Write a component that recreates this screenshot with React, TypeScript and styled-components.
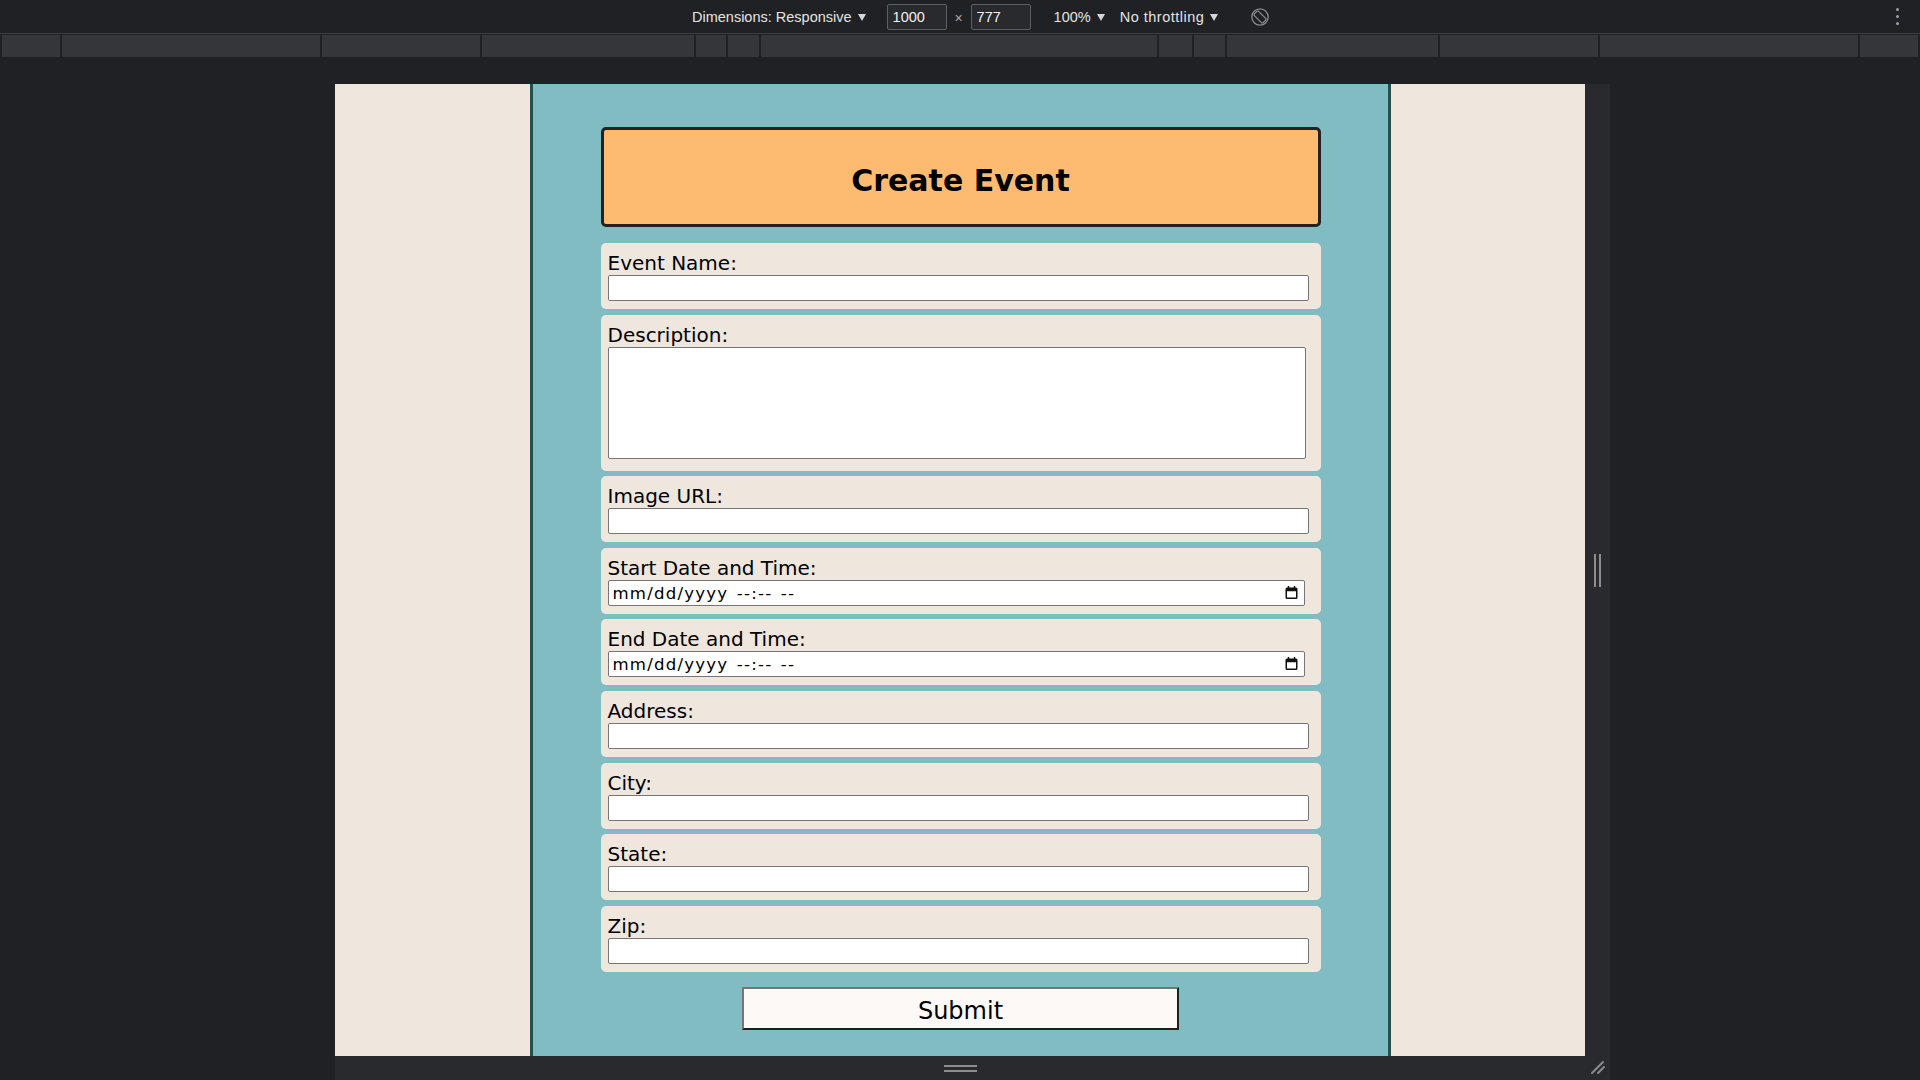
import React from "react";
import styled, { createGlobalStyle } from "styled-components";

const GlobalStyle = createGlobalStyle`
  html, body {
    margin: 0;
    padding: 0;
    background: #202124;
    overflow: hidden;
  }
  * {
    box-sizing: border-box;
  }
`;

// media query bars in the devtools ruler, left to right
const rulerSegments = [58, 258, 158, 212, 30, 31, 396, 33, 31, 211, 158, 258, 58];

const fields = [
  { id: "name", label: "Event Name:", type: "text" },
  { id: "description", label: "Description:", type: "textarea" },
  { id: "image", label: "Image URL:", type: "text" },
  { id: "start", label: "Start Date and Time:", type: "date" },
  { id: "end", label: "End Date and Time:", type: "date" },
  { id: "address", label: "Address:", type: "text" },
  { id: "city", label: "City:", type: "text" },
  { id: "state", label: "State:", type: "text" },
  { id: "zip", label: "Zip:", type: "text" },
];

const RotateIcon = () => (
  <svg width="20" height="20" viewBox="0 0 20 20" fill="none" stroke="#8a8b8d" strokeWidth="1.3">
    <circle cx="10" cy="10" r="8.2" />
    <rect x="7" y="3.8" width="6" height="12.4" rx="1.2" transform="rotate(-45 10 10)" />
  </svg>
);

const CalendarIcon = () => (
  <svg width="13" height="13" viewBox="0 0 13 13" fill="none" stroke="#111" strokeWidth="1.5">
    <rect x="1.25" y="2.25" width="10.5" height="10" rx="0.8" />
    <line x1="1.25" y1="4" x2="11.75" y2="4" strokeWidth="2.5" />
    <line x1="3.5" y1="0" x2="3.5" y2="2.5" />
    <line x1="9.5" y1="0" x2="9.5" y2="2.5" />
  </svg>
);

const CornerIcon = () => (
  <svg width="16" height="16" viewBox="0 0 16 16" stroke="#8a8b8d" strokeWidth="2" strokeLinecap="round">
    <line x1="2" y1="14" x2="13" y2="3" />
    <line x1="8" y1="14" x2="14" y2="8" />
  </svg>
);

export default function App() {
  return (
    <Shell>
      <GlobalStyle />
      <Toolbar>
        <ToolText>Dimensions: Responsive</ToolText>
        <Caret />
        <DimBox $first>1000</DimBox>
        <Times>×</Times>
        <DimBox>777</DimBox>
        <ToolText $ml={23}>100%</ToolText>
        <Caret />
        <ToolText $ml={15} $spacing={0.5}>No throttling</ToolText>
        <Caret />
        <RotateWrap>
          <RotateIcon />
        </RotateWrap>
        <Kebab>
          <Dot />
          <Dot />
          <Dot />
        </Kebab>
      </Toolbar>
      <Ruler>
        {rulerSegments.map((w, i) => (
          <RulerBar key={i} $w={w} />
        ))}
      </Ruler>
      <Stage>
        <Frame>
          <Page>
            <Side />
            <Panel>
              <Header>
                <Title>Create Event</Title>
              </Header>
              <Form onSubmit={(e) => e.preventDefault()}>
                {fields.map((f) => (
                  <Field key={f.id}>
                    <Label htmlFor={f.id}>{f.label}</Label>
                    {f.type === "textarea" ? (
                      <TextArea id={f.id} />
                    ) : f.type === "date" ? (
                      <DateWrap>
                        <DateInput id={f.id} type="text" placeholder="mm/dd/yyyy --:-- --" />
                        <CalendarButton>
                          <CalendarIcon />
                        </CalendarButton>
                      </DateWrap>
                    ) : (
                      <TextInput id={f.id} type="text" />
                    )}
                  </Field>
                ))}
                <Submit type="submit">Submit</Submit>
              </Form>
            </Panel>
            <Side />
          </Page>
          <SideHandle>
            <Grip $vertical />
            <Grip $vertical />
          </SideHandle>
          <BottomHandle>
            <Grip />
            <Grip />
          </BottomHandle>
          <Corner>
            <CornerIcon />
          </Corner>
        </Frame>
      </Stage>
    </Shell>
  );
}

const Shell = styled.div`
  width: 1920px;
  height: 1080px;
  display: flex;
  flex-direction: column;
  background: #202124;
  overflow: hidden;
`;

const Toolbar = styled.div`
  height: 34px;
  display: flex;
  align-items: center;
  padding-left: 692px;
  border-bottom: 1px solid #3c3d40;
  font-family: "Liberation Sans", Arial, sans-serif;
  font-size: 14.5px;
  color: #e3e3e3;
`;

const ToolText = styled.span<{ $ml?: number; $spacing?: number }>`
  margin-left: ${(p) => p.$ml || 0}px;
  letter-spacing: ${(p) => p.$spacing || 0}px;
  white-space: nowrap;
`;

const Caret = styled.span`
  width: 0;
  height: 0;
  margin-left: 6px;
  margin-top: 1px;
  border-left: 4px solid transparent;
  border-right: 4px solid transparent;
  border-top: 7px solid #d5d6d8;
`;

const DimBox = styled.div<{ $first?: boolean }>`
  width: 60px;
  height: 26px;
  margin-left: ${(p) => (p.$first ? 21 : 0)}px;
  padding: 4px 5px 0;
  border: 1px solid #5d5f62;
  border-radius: 2px;
  background: #292a2d;
  color: #f1f1f1;
`;

const Times = styled.span`
  width: 24px;
  text-align: center;
  color: #a8a9ab;
  font-size: 14px;
  margin-top: 3px;
`;

const RotateWrap = styled.div`
  display: flex;
  margin-left: 32px;
`;

const Kebab = styled.div`
  margin-left: auto;
  margin-right: 21px;
  display: flex;
  flex-direction: column;
  gap: 4px;
`;

const Dot = styled.span`
  width: 3px;
  height: 3px;
  border-radius: 50%;
  background: #9aa0a6;
`;

const Ruler = styled.div`
  height: 22px;
  margin: 1px 2px 0;
  display: flex;
  gap: 2px;
`;

const RulerBar = styled.div<{ $w: number }>`
  width: ${(p) => p.$w}px;
  background: #35363a;
`;

const Stage = styled.div`
  flex: 1;
  padding: 27px 0 0 335px;
`;

const Frame = styled.div`
  display: grid;
  grid-template-columns: 1250px 25px;
  grid-template-rows: 972px 24px;
  width: 1275px;
  background: #292a2d;
`;

const Page = styled.div`
  display: grid;
  grid-template-columns: 195px 861px 194px;
  height: 972px;
  background: #efe6de;
  font-family: "DejaVu Sans", Verdana, sans-serif;
  color: #000;
`;

const Side = styled.div`
  background: #efe6de;
`;

const Panel = styled.div`
  display: flex;
  flex-direction: column;
  align-items: center;
  padding-top: 43px;
  background: #80bcc2;
  border-left: 3px solid #24504f;
  border-right: 3px solid #24504f;
`;

const Header = styled.div`
  width: 720px;
  height: 100px;
  padding-top: 7px;
  display: flex;
  align-items: center;
  justify-content: center;
  background: #fdbb72;
  border: 3px solid #222;
  border-radius: 5px;
`;

const Title = styled.h1`
  margin: 0;
  font-size: 30px;
  font-weight: bold;
  line-height: 1;
`;

const Form = styled.form`
  width: 720px;
  margin-top: 16px;
  display: flex;
  flex-direction: column;
  align-items: center;
  gap: 5.6px;
`;

const Field = styled.div`
  width: 100%;
  padding: 8px 12px 8px 7px;
  background: #efe6de;
  border-radius: 5px;
`;

const Label = styled.label`
  display: block;
  font-size: 20px;
  line-height: 24px;
`;

const TextInput = styled.input`
  display: block;
  width: 100%;
  height: 26px;
  padding: 1px 3px;
  border: 1px solid #767676;
  border-radius: 2px;
  background: #fff;
  font-family: "DejaVu Sans", Verdana, sans-serif;
  font-size: 16.6px;
`;

const DateWrap = styled.div`
  position: relative;
  width: 697px;
`;

const DateInput = styled(TextInput)`
  padding: 1px 3px 0 4px;
  color: #000;
  letter-spacing: 1.2px;
  word-spacing: 2px;

  &::placeholder {
    color: #000;
    opacity: 1;
  }
`;

const CalendarButton = styled.span`
  position: absolute;
  top: 6px;
  right: 7px;
  display: flex;
`;

const TextArea = styled.textarea`
  display: block;
  width: 698px;
  height: 112px;
  margin-bottom: 4px;
  border: 1px solid #767676;
  border-radius: 2px;
  resize: none;
  background: #fff;
`;

const Submit = styled.button`
  width: 437px;
  height: 43px;
  margin-top: 9.4px;
  padding-top: 6px;
  background: #fdf9f7;
  border: 2px solid;
  border-color: #767676 #1e1e1e #1e1e1e #767676;
  font-family: "DejaVu Sans", Verdana, sans-serif;
  font-size: 24px;
  line-height: 1;
  color: #000;
`;

const SideHandle = styled.div`
  display: flex;
  align-items: center;
  justify-content: center;
  gap: 3px;
`;

const BottomHandle = styled.div`
  display: flex;
  flex-direction: column;
  align-items: center;
  justify-content: center;
  gap: 3px;
`;

const Grip = styled.span<{ $vertical?: boolean }>`
  width: ${(p) => (p.$vertical ? "2px" : "33px")};
  height: ${(p) => (p.$vertical ? "33px" : "2px")};
  background: #8c8d8f;
`;

const Corner = styled.div`
  display: flex;
  align-items: flex-start;
  justify-content: center;
  padding-top: 3px;
`;
